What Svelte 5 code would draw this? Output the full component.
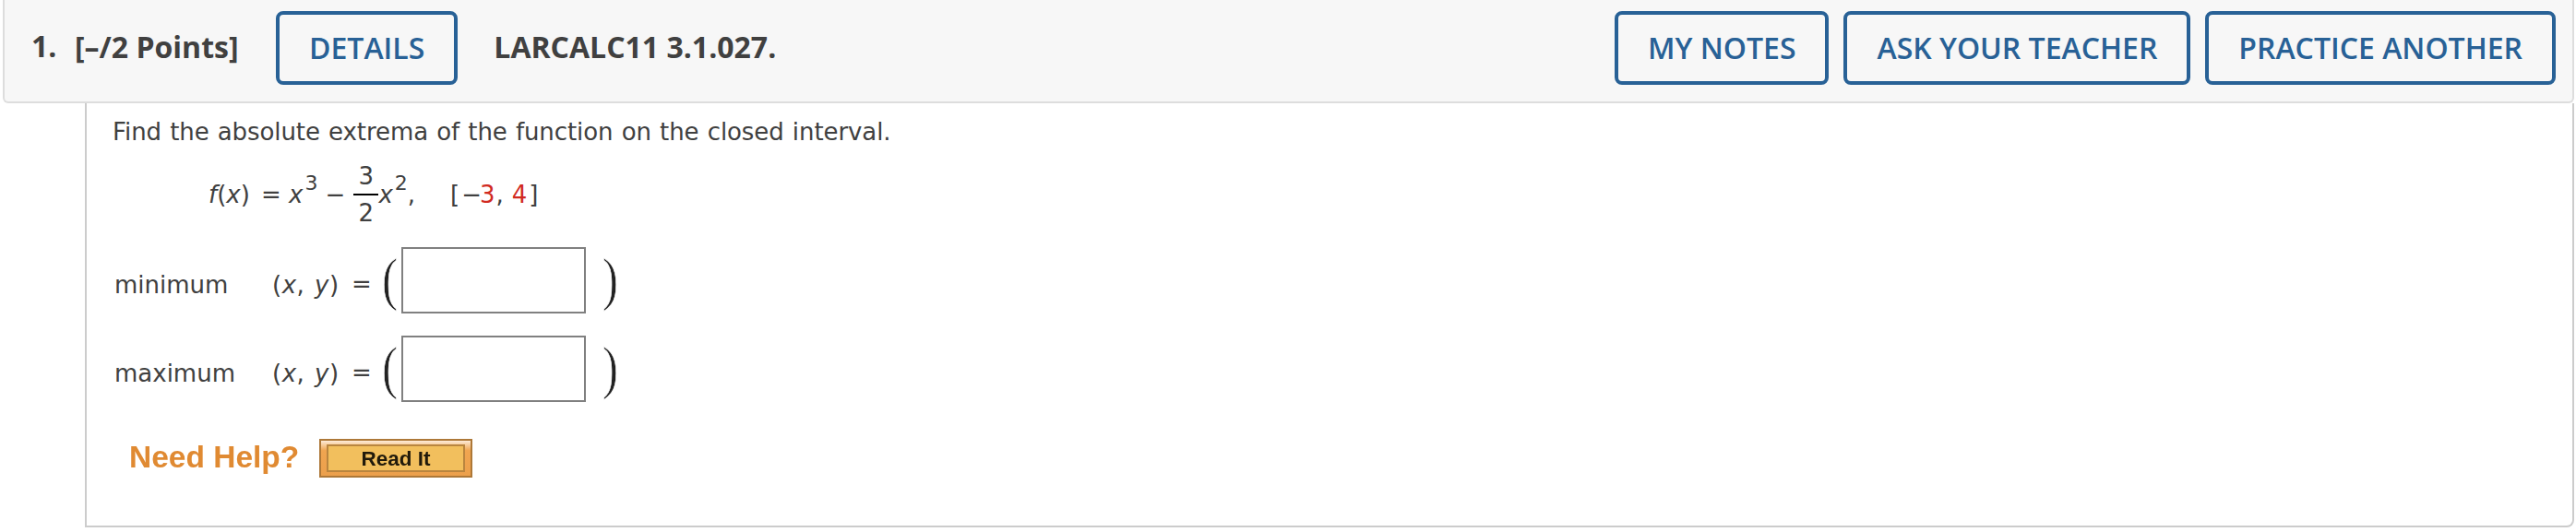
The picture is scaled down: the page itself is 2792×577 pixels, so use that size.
<script lang="ts">
	const actions = ['My Notes', 'Ask Your Teacher', 'Practice Another'];
	let answers = $state([
		{ label: 'minimum', value: '' },
		{ label: 'maximum', value: '' }
	]);
</script>

<section class="question">
	<header>
		<span class="number">1.</span>
		<span class="points">[–/2 Points]</span>
		<button class="btn">Details</button>
		<span class="name">LARCALC11 3.1.027.</span>
		<div class="actions">
			{#each actions as action}
				<button class="btn">{action}</button>
			{/each}
		</div>
	</header>

	<div class="body">
		<p class="prompt">Find the absolute extrema of the function on the closed interval.</p>

		<div class="formula">
			<span class="fn"><i>f</i>(<i>x</i>)</span>
			<span class="eq">=</span>
			<i>x</i><span class="sup">3</span>
			<span class="minus">−</span>
			<span class="frac"><span>3</span><span class="den">2</span></span>
			<i>x</i><span class="sup">2</span><span>,</span>
			<span class="interval">[<span class="neg">−</span><span class="red three">3</span><span class="comma">,</span><span class="red four">4</span><span class="close">]</span></span>
		</div>

		{#each answers as answer}
			<div class="answer">
				<label class="label" for={answer.label}>{answer.label}</label>
				<span class="pair">(<i>x</i>,&nbsp;<i>y</i>)</span>
				<span class="equals">=</span>
				<span class="paren"><span>(</span></span>
				<input id={answer.label} type="text" bind:value={answer.value} />
				<span class="paren right"><span>)</span></span>
			</div>
		{/each}

		<div class="help">
			<span class="help-title">Need Help?</span>
			<button class="read"><span class="face"><span class="caption">Read It</span></span></button>
		</div>
	</div>
</section>

<style>
	:global(body) {
		margin: 0;
		background: #fff;
	}
	.question {
		box-sizing: border-box;
		height: 577px;
		padding: 0 2px 0 3px;
		color: #404040;
		font-family: 'DejaVu Sans', Verdana, sans-serif;
		font-size: 26px;
	}
	header {
		box-sizing: border-box;
		display: flex;
		align-items: center;
		height: 112px;
		padding: 0 18px 8px 29px;
		background: #f7f7f7;
		border: 2px solid #ddd;
		border-top: 0;
		border-radius: 0 0 6px 6px;
		font: 700 32px/44px 'Open Sans', sans-serif;
		white-space: nowrap;
	}
	.number {
		width: 47px;
		padding-bottom: 3px;
	}
	.points {
		width: 218px;
	}
	.btn {
		box-sizing: border-box;
		height: 80px;
		margin-top: 2px;
		padding: 0 32px;
		border: 4px solid #286196;
		border-radius: 8px;
		background: transparent;
		color: #286196;
		font: 600 32px/44px 'Open Sans', sans-serif;
		text-transform: uppercase;
	}
	.name {
		margin-left: 39px;
	}
	.actions {
		display: flex;
		gap: 16px;
		margin-left: auto;
	}
	.body {
		box-sizing: border-box;
		height: 460px;
		margin-left: 89px;
		padding: 15px 0 0 28px;
		border: 2px solid #ccc;
		border-top: 0;
		border-radius: 0 0 8px 0;
	}
	.prompt {
		margin: 0;
		line-height: 32px;
		letter-spacing: -0.08px;
		word-spacing: 1px;
	}
	.formula {
		display: flex;
		align-items: center;
		height: 72px;
		margin: 16px 0 0 104px;
		line-height: 32px;
	}
	.fn {
		width: 57px;
	}
	.eq {
		width: 30px;
	}
	.sup {
		margin: -24px 0 0 2px;
		font-size: 22px;
	}
	.minus {
		width: 31px;
		margin-left: 8px;
	}
	.frac {
		display: flex;
		flex-direction: column;
		width: 27px;
		text-align: center;
		line-height: 38px;
	}
	.den {
		border-top: 2px solid #000;
	}
	.interval {
		margin-left: 38px;
	}
	.neg {
		margin-left: 2px;
	}
	.three {
		margin-left: -2px;
	}
	.comma {
		margin-left: 1px;
	}
	.four {
		margin-left: 9px;
	}
	.close {
		margin-left: 2px;
	}
	.red {
		color: #d12a1f;
	}
	.answer {
		display: flex;
		align-items: center;
		height: 72px;
		margin: 21px 0 24px 2px;
		line-height: 32px;
	}
	.answer + .answer {
		margin-top: 0;
	}
	.label {
		width: 171px;
		padding-top: 9px;
	}
	.pair {
		width: 86px;
		padding-top: 9px;
		letter-spacing: 0.5px;
		word-spacing: 2px;
	}
	.equals {
		width: 33px;
		padding-top: 7px;
	}
	.paren {
		width: 21px;
		height: 68px;
		color: #222;
		font: 64px/66px 'Liberation Serif', serif;
		-webkit-text-stroke: 0.8px #fff;
	}
	.paren span {
		display: inline-block;
		transform: scaleX(0.8);
		transform-origin: left;
	}
	.right {
		margin-left: 18px;
	}
	input {
		box-sizing: border-box;
		width: 200px;
		height: 72px;
		padding: 0 8px;
		border: 2px solid #808080;
		border-radius: 0;
		background: #fff;
		font: inherit;
	}
	.help {
		display: flex;
		align-items: center;
		height: 42px;
		margin: 40px 0 0 18px;
		font-family: 'Liberation Sans', Arial, sans-serif;
		font-weight: 700;
	}
	.help-title {
		width: 206px;
		padding-bottom: 2px;
		color: #e08a32;
		font-size: 33.5px;
		filter: blur(0.5px);
	}
	.read {
		box-sizing: border-box;
		width: 166px;
		height: 42px;
		padding: 4px 6px;
		border: 2px solid #ad7838;
		background: linear-gradient(#fdebd8, #f0a550 28%, #eca04c);
		color: #211a0b;
		font: 700 22.5px/28px 'Liberation Sans', Arial, sans-serif;
	}
	.face {
		display: block;
		height: 26px;
		border: 2px solid #b9853f;
		background: #f2bf5d;
	}
	.caption {
		filter: blur(0.5px);
	}
</style>
